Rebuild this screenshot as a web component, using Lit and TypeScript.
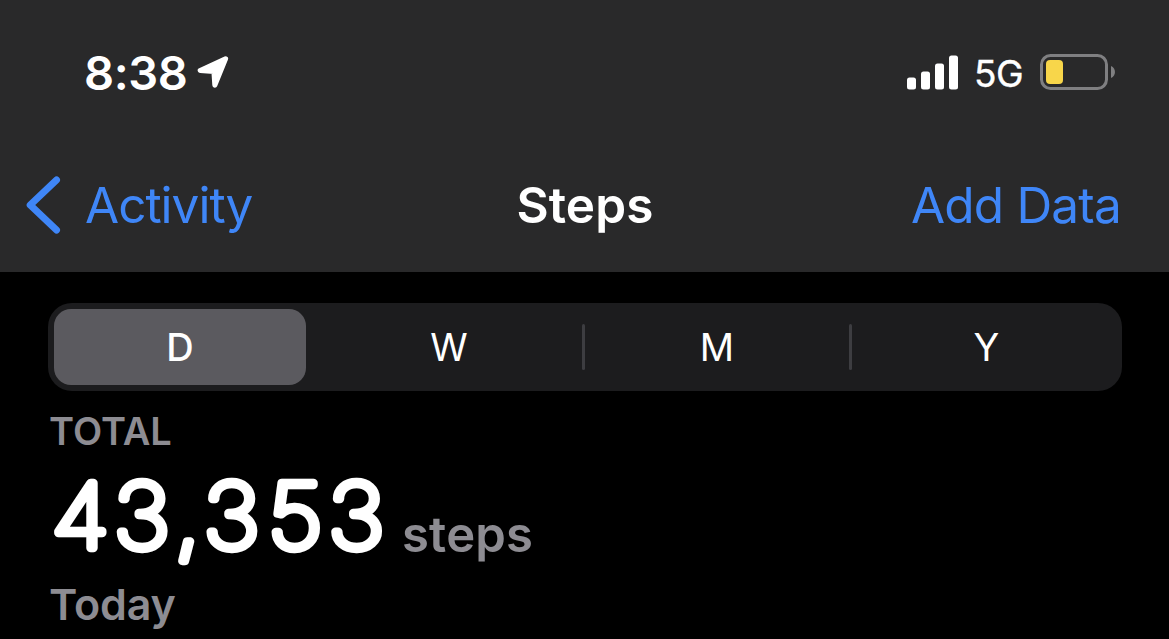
import { LitElement, html, css } from "lit";
import { customElement, state } from "lit/decorators.js";

@customElement("status-bar")
class StatusBar extends LitElement {
  static styles = css`
    :host { display: flex; align-items: center; height: 133px; padding: 6px 53px 0 84px; color: #fff; }
    .time { font-size: 47px; font-weight: 600; line-height: 56px; letter-spacing: -0.4px; }
    .arrow { margin-left: 8px; }
    .right { margin-left: auto; display: flex; align-items: center; }
    .net { font-size: 37px; font-weight: 400; line-height: 44px; padding-top: 3px; margin: 0 17px 0 15px; letter-spacing: -0.5px; -webkit-text-stroke: 0.4px #fff; }
    svg { display: block; }
  `;
  render() {
    return html`
      <span class="time">8:38</span>
      <svg class="arrow" width="34" height="36" viewBox="0 0 34 36">
        <path d="M30.600 3.800 5.200 15.500 18.900 16.400 19.800 30.200Z" fill="#fff" stroke="#fff" stroke-width="5" stroke-linejoin="round" />
      </svg>
      <div class="right">
        <svg width="52" height="36" viewBox="0 0 52 36" fill="#fff">
          <rect x="0" y="22.500" width="9" height="12" rx="2.500" />
          <rect x="14" y="16.500" width="9" height="18" rx="2.500" />
          <rect x="28" y="8.500" width="9" height="26" rx="2.500" />
          <rect x="42" y="0.500" width="9" height="34" rx="2.500" />
        </svg>
        <span class="net">5G</span>
        <svg width="76" height="37" viewBox="0 0 76 37">
          <rect x="1.500" y="1.500" width="65" height="33" rx="9" fill="none" stroke="#7f7f81" stroke-width="3" />
          <rect x="6" y="6" width="17" height="24" rx="4" fill="#f8d64a" />
          <path d="M71 12C76.300 14 76.300 22 71 24Z" fill="#7f7f81" />
        </svg>
      </div>
    `;
  }
}

@customElement("nav-bar")
class NavBar extends LitElement {
  static styles = css`
    :host { display: grid; grid-template-columns: minmax(0, 1fr) auto minmax(0, 1fr); align-items: center; height: 132px; padding: 0 48px 0 25px; font-size: 49.5px; line-height: 60px; white-space: nowrap; }
    .back { display: flex; align-items: center; gap: 24px; color: #3f86f7; letter-spacing: -1px; }
    .title { color: #fff; font-weight: 600; letter-spacing: 0.1px; padding-left: 24px; }
    .add { color: #3f86f7; justify-self: end; letter-spacing: -0.8px; }
    svg { display: block; }
  `;
  render() {
    return html`
      <div class="back">
        <svg width="36" height="60" viewBox="0 0 36 60">
          <path d="M31.500 5 5.200 30 31.500 55" fill="none" stroke="#3f86f7" stroke-width="7" stroke-linecap="round" stroke-linejoin="round" />
        </svg>
        <span>Activity</span>
      </div>
      <div class="title">Steps</div>
      <div class="add">Add Data</div>
    `;
  }
}

@customElement("range-picker")
class RangePicker extends LitElement {
  @state() private selected = 0;
  static styles = css`
    :host { display: grid; grid-template-columns: 252px 18px 250px 19px 248px 19px 253px; align-items: center; height: 76px; padding: 6px; border-radius: 24px; background: #1c1c1e; }
    .seg { height: 76px; border-radius: 17px; display: flex; align-items: center; justify-content: center; color: #fff; font-size: 38px; font-weight: 400; }
    .seg.on { background: #5b5a5f; font-weight: 500; }
    .sep { justify-self: center; width: 3px; height: 46px; border-radius: 2px; background: #3d3d41; }
    .sep.hidden { visibility: hidden; }
  `;
  render() {
    const items = ["D", "W", "M", "Y"];
    return items.map((t, i) => html`
      ${i > 0 ? html`<span class="sep ${this.selected === i || this.selected === i - 1 ? "hidden" : ""}"></span>` : ""}
      <div class="seg ${this.selected === i ? "on" : ""}" @click=${() => (this.selected = i)}>${t}</div>
    `);
  }
}

@customElement("step-total")
class StepTotal extends LitElement {
  static styles = css`
    :host { display: block; color: #8d8c92; font-weight: 600; }
    .label { font-size: 38px; line-height: 46px; letter-spacing: 0; padding-left: 1px; }
    .row { display: flex; align-items: flex-start; height: 124px; }
    .big { display: block; }
    .digits { font-weight: 100; font-size: 89.5px; fill: #fff; stroke: #fff; stroke-width: 8.4px; stroke-linejoin: round; }
    .unit { font-size: 49px; line-height: 60px; margin: 51px 0 0 16px; letter-spacing: 0.2px; }
    .day { font-size: 43px; line-height: 52px; letter-spacing: -0.1px; padding-left: 1px; }
  `;
  render() {
    const glyphs = [["4", 3.2], ["3", 60.9], [",", 117.3], ["3", 143.9], ["5", 203.7], ["3", 259.6]];
    return html`
      <div class="label">TOTAL</div>
      <div class="row">
        <svg class="big" width="338" height="124" viewBox="0 0 338 124">
          <text class="digits" transform="scale(1.08 1)" x=${glyphs.map((g) => g[1]).join(" ")} y="94.500">${glyphs.map((g) => g[0]).join("")}</text>
        </svg>
        <span class="unit">steps</span>
      </div>
      <div class="day">Today</div>
    `;
  }
}

@customElement("app-root")
class AppRoot extends LitElement {
  static styles = css`
    :host { display: block; height: 639px; overflow: hidden; background: #000; font-family: Inter, "Liberation Sans", sans-serif; }
    .header { height: 272px; background: #29292a; }
    .content { padding: 31px 47px 0 48px; }
    step-total { margin-top: 17px; }
  `;
  render() {
    return html`
      <div class="header">
        <status-bar></status-bar>
        <nav-bar></nav-bar>
      </div>
      <div class="content">
        <range-picker></range-picker>
        <step-total></step-total>
      </div>
    `;
  }
}
